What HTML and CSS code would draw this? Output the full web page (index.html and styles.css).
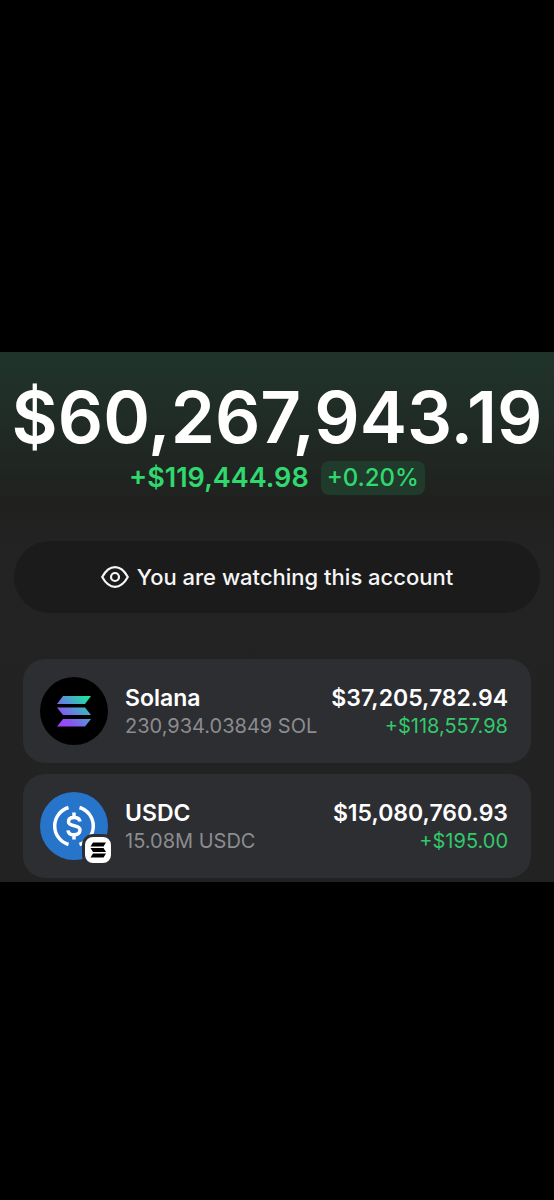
FILE: index.html
```html
<!DOCTYPE html>
<html lang="en">
<head>
<meta charset="utf-8">
<meta name="viewport" content="width=device-width, initial-scale=1">
<title>Wallet</title>
<link rel="stylesheet" href="styles.css">
</head>
<body>
<main class="wallet">
  <header class="summary">
    <h1 class="total">$60,267,943.19</h1>
    <p class="change">
      <span class="change-amount">+$119,444.98</span>
      <span class="change-percent">+0.20%</span>
    </p>
  </header>
  <p class="notice">
    <svg class="eye" viewBox="0 0 28 22" fill="none" stroke="currentColor" stroke-width="2.2" aria-hidden="true">
      <path d="M1.200 11C4.500 5 9 1.200 14 1.200S23.500 5 26.800 11C23.500 17 19 20.800 14 20.800S4.500 17 1.200 11Z" stroke-linejoin="round"/>
      <circle cx="14" cy="11" r="4"/>
    </svg>
    <span>You are watching this account</span>
  </p>
  <ul class="tokens">
    <li class="token">
      <span class="token-icon">
        <svg class="coin" viewBox="0 0 68 68" aria-hidden="true">
          <defs>
            <linearGradient id="sol" gradientUnits="userSpaceOnUse" x1="20" y1="50" x2="49" y2="18">
              <stop offset="0" stop-color="#a040ff"/>
              <stop offset="0.25" stop-color="#8a56f2"/>
              <stop offset="0.6" stop-color="#4c9fd0"/>
              <stop offset="1" stop-color="#14f195"/>
            </linearGradient>
          </defs>
          <circle cx="34" cy="34" r="34"/>
          <path fill="url(#sol)" d="M23 19H51L45 27H17ZM17 30.500H45L51 38H23ZM23 42H51L45 49.500H17Z"/>
        </svg>
      </span>
      <div class="details">
        <div class="row"><span class="name">Solana</span><span class="name">$37,205,782.94</span></div>
        <div class="row"><span class="amount">230,934.03849 SOL</span><span class="gain">+$118,557.98</span></div>
      </div>
    </li>
    <li class="token">
      <span class="token-icon">
        <svg class="coin" viewBox="0 0 68 68" fill="none" stroke="#fff" stroke-width="3.500" aria-hidden="true">
          <circle cx="34" cy="34" r="34" fill="#2775ca" stroke="none"/>
          <path d="M28.500 15.500A19.300 19.300 0 0 0 28.500 52.500M39.500 15.500A19.300 19.300 0 0 1 39.500 52.500"/>
          <path d="M34 20.500V26M34 42V47.500M40 29.500C39.500 26.700 37.500 25.500 34 25.500C30.500 25.500 28.500 27.200 28.500 29.700C28.500 35.500 40 32 40 38C40 41 37.500 42.800 34 42.800C30.500 42.800 28.300 41.400 28 38.300"/>
        </svg>
        <svg class="network" viewBox="0 0 26 26" aria-hidden="true">
          <path d="M8 5.500H21L18.500 9.500H5.500ZM5.500 11H18.500L21 15H8ZM8 16.500H21L18.500 20.500H5.500Z"/>
        </svg>
      </span>
      <div class="details">
        <div class="row"><span class="name">USDC</span><span class="name">$15,080,760.93</span></div>
        <div class="row"><span class="amount">15.08M USDC</span><span class="gain">+$195.00</span></div>
      </div>
    </li>
  </ul>
</main>
</body>
</html>
```
FILE: styles.css
```css
* {
  box-sizing: border-box;
}

body {
  margin: 0;
  padding: 352px 0 318px;
  background: #000;
  color: #fff;
  font-family: Inter, "Liberation Sans", sans-serif;
}

h1,
p,
ul {
  margin: 0;
  padding: 0;
}

.wallet {
  padding: 22px 14px 4px;
  background: linear-gradient(#20332a 0, #202d26 60px, #20211f 150px, #222322 200px, #222 100%);
}

.summary {
  display: flex;
  flex-direction: column;
  align-items: center;
}

.total {
  font-size: 71px;
  font-weight: 600;
  line-height: 87px;
  white-space: nowrap;
}

.change {
  display: flex;
  align-items: center;
  gap: 12px;
  color: #30d96f;
  font-weight: 600;
  line-height: 34px;
}

.change-amount {
  font-size: 27px;
}

.change-percent {
  padding: 0 6px;
  border-radius: 8px;
  background: #203b2b;
  font-size: 24px;
  font-weight: 500;
}

.notice {
  display: flex;
  align-items: center;
  justify-content: center;
  gap: 8px;
  margin-top: 46px;
  padding: 22px 0;
  border-radius: 36px;
  background: #1b1b1b;
  color: #f6f6f6;
  font-size: 22px;
  font-weight: 500;
  line-height: 28px;
}

.eye {
  width: 28px;
  height: 22px;
}

.tokens {
  display: flex;
  flex-direction: column;
  gap: 11px;
  margin-top: 46px;
  padding: 0 9px;
  list-style: none;
}

.token {
  display: flex;
  align-items: center;
  gap: 17px;
  padding: 18px 23px 18px 17px;
  border-radius: 22px;
  background: #2d2e32;
}

.token-icon {
  position: relative;
  flex: none;
  width: 68px;
  height: 68px;
}

.coin {
  display: block;
  width: 100%;
}

.network {
  position: absolute;
  right: -6px;
  bottom: -6px;
  width: 32px;
  border: 3px solid #2d2e32;
  border-radius: 11px;
  background: #fff;
}

.details {
  flex: 1;
  padding-top: 2px;
}

.row {
  display: flex;
  justify-content: space-between;
  line-height: 28px;
  white-space: nowrap;
}

.name {
  font-size: 23px;
  font-weight: 600;
}

.amount,
.gain {
  font-size: 20px;
}

.amount {
  color: #8c8c90;
}

.gain {
  color: #32c96b;
}
```
